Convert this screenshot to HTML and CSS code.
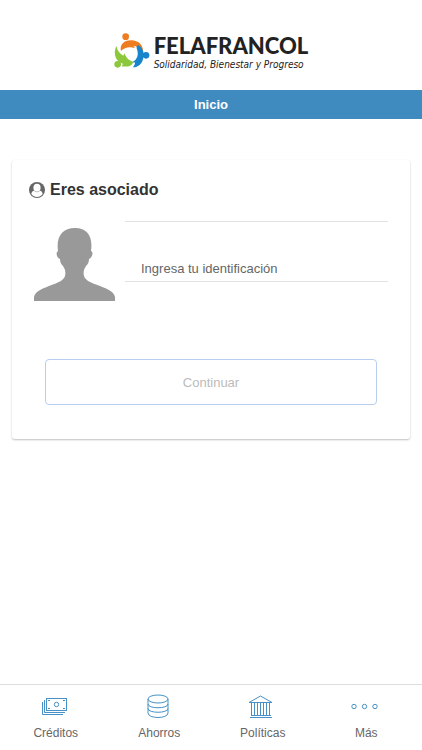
FILE: index.html
```html
<!DOCTYPE html>
<html lang="es">
<head>
  <meta charset="UTF-8" />
  <meta name="viewport" content="width=device-width, initial-scale=1.0" />
  <title>Felafrancol</title>
  <link rel="stylesheet" href="styles.css">
</head>
<body>

<!-- logo -->
<header class="brand">
  <svg class="brand-mark" viewBox="8 8 108 111" aria-hidden="true">
    <g fill="#ee7d22">
      <circle cx="43" cy="19" r="10"/>
      <path d="M29 62C24 44 38 29 61 30c20 1 33 12 35 34C88 53 78 48 66 47c2 2 4 4 5 7-15-6-30-4-42 8z"/>
    </g>
    <g fill="#8cc83c">
      <circle cx="19" cy="102" r="10"/>
      <path d="M15 47c3 14 10 23 21 29l3-7c5 12 12 21 26 25-1 12-15 17-34 14l4-8C14 94 4 72 15 47z"/>
    </g>
    <g fill="#1784cc">
      <circle cx="104" cy="75" r="10"/>
      <path d="M76 54c-1-6 1-9 5-9 13 7 18 21 15 37-3 17-14 29-32 29 5-4 7-9 7-15-3 1-5 1-8 0 16-9 20-24 13-42z"/>
    </g>
  </svg>
  <div class="brand-text">
    <span class="brand-name">FELAFRANCOL</span>
    <span class="brand-slogan">Solidaridad, Bienestar y Progreso</span>
  </div>
</header>

<h1 class="page-title">Inicio</h1>

<!-- login card -->
<main class="content">
  <form class="card">
    <h2 class="card-title">
      <svg class="card-icon" viewBox="0 0 16 16" aria-hidden="true">
        <circle cx="8" cy="8" r="8" fill="#666"/>
        <ellipse cx="8" cy="5.800" rx="3.600" ry="4" fill="#fff"/>
        <path fill="#fff" d="M2.300 12c.3-1.900 1.200-3.100 2.700-3.300 1.700 1.900 4.300 1.900 6 0 1.500.2 2.400 1.400 2.700 3.300-2.800 3.900-8.600 3.900-11.400 0z"/>
      </svg>
      Eres asociado
    </h2>
    <div class="identity">
      <svg class="avatar" viewBox="0 0 81 73" aria-hidden="true">
        <path fill="#999" d="M0 73v-4c1-5 7-8 15-11 9-3 15-6 16-10 1-4 0-7-2-10-2-2-3-4-3-7-3-1-4-5-3-7l1-1C22 9 28 0 41 0s18 9 16 23c3 1 1 7-2 8 0 3-1 5-3 7-2 3-3 6-2 10 1 4 7 7 16 10 8 3 14 6 15 11v4z"/>
      </svg>
      <div class="field">
        <label for="identificacion">Ingresa tu identificación</label>
        <input type="text" id="identificacion" inputmode="numeric">
      </div>
    </div>
    <button type="submit" class="btn-continue" disabled>Continuar</button>
  </form>
</main>

<!-- bottom tabs -->
<nav class="tabs">
  <a href="#creditos">
    <svg viewBox="2 0 26 26" aria-hidden="true">
      <rect x="5.500" y="5.500" width="20" height="12"/>
      <circle cx="15.500" cy="11.500" r="2.200"/>
      <path d="M3.500 7v12.500H24M1.500 9v12.500H22M7 7.500h2M22 7.500h2M7 15.500h2M22 15.500h2"/>
    </svg>
    Créditos
  </a>
  <a href="#ahorros">
    <svg viewBox="0 0 26 26" aria-hidden="true">
      <ellipse cx="12" cy="6" rx="10" ry="4"/>
      <path d="M2 6v14c0 6 20 6 20 0V6M2 11c0 5 20 5 20 0M2 15.500c0 5 20 5 20 0"/>
    </svg>
    Ahorros
  </a>
  <a href="#politicas">
    <svg viewBox="1 0 26 26" aria-hidden="true">
      <path d="M0 9.500h23L11.500 3zM2 22.500h20M1 24.500h22M2.500 10v12M5.500 10v12M8.500 10v12M11.500 10v12M14.500 10v12M17.500 10v12M20.500 10v12"/>
    </svg>
    Políticas
  </a>
  <a href="#mas">
    <svg viewBox="0 0 26 26" aria-hidden="true">
      <circle cx="1" cy="13.500" r="2.200"/>
      <circle cx="11.500" cy="13.500" r="2.200"/>
      <circle cx="22" cy="13.500" r="2.200"/>
    </svg>
    Más
  </a>
</nav>

</body>
</html>
```

FILE: styles.css
```css
* {
  box-sizing: border-box;
}

body {
  margin: 0;
  min-height: 100vh;
  display: flex;
  flex-direction: column;
  font-family: "Liberation Sans", Arial, sans-serif;
  font-size: 13px;
  color: #666;
  background: #fff;
}

/* logo */
.brand {
  height: 90px;
  padding-top: 13px;
  display: flex;
  justify-content: center;
  align-items: center;
  gap: 4px;
}

.brand-mark {
  width: 36px;
  height: 37px;
}

.brand-text {
  display: flex;
  flex-direction: column;
  color: #222;
}

.brand-name {
  font: 900 22px/26px Lato, sans-serif;
}

.brand-slogan {
  font: italic 10px/12px "DejaVu Sans Condensed", "DejaVu Sans", sans-serif;
}

.page-title {
  margin: 0;
  font-size: 13px;
  line-height: 29px;
  text-align: center;
  color: #fff;
  background: #3f8bc0;
}

/* card */
.content {
  flex: 1;
  padding: 41px 12px 20px;
}

.card {
  padding: 20px 22px 34px 17px;
  border-radius: 3px;
  box-shadow: 0 1px 2px rgba(0, 0, 0, 0.25);
}

.card-title {
  margin: 0;
  display: flex;
  align-items: center;
  gap: 5px;
  font-size: 16px;
  line-height: 20px;
  color: #333;
}

.card-icon {
  width: 16px;
  height: 16px;
}

.identity {
  margin: 21px 0 58px 5px;
  display: flex;
  align-items: flex-start;
  gap: 10px;
}

.avatar {
  width: 81px;
  height: 73px;
  margin-top: 7px;
}

.field {
  flex: 1;
  height: 61px;
  display: grid;
  border-top: 1px solid #e2e2e4;
  border-bottom: 1px solid #e2e2e4;
}

/* label rests over the empty input */
.field label,
.field input {
  grid-area: 1 / 1;
  align-self: end;
}

.field label {
  padding: 0 16px 4px;
  line-height: 16px;
  pointer-events: none;
}

.field input {
  width: 100%;
  height: 28px;
  padding: 0 16px;
  border: 0;
  outline: none;
  font: inherit;
  color: inherit;
  background: transparent;
}

.field:focus-within label {
  padding-bottom: 30px;
}

.btn-continue {
  display: block;
  width: calc(100% - 27px);
  height: 46px;
  margin-left: 16px;
  border: 1px solid #b9cdf3;
  border-radius: 4px;
  font: inherit;
  color: #bbb;
  background: #fff;
}

/* bottom tabs */
.tabs {
  display: flex;
  padding: 8px 4px;
  border-top: 1px solid #ddd;
}

.tabs a {
  flex: 1;
  display: flex;
  flex-direction: column;
  align-items: center;
  gap: 6px;
  font-size: 12px;
  line-height: 17px;
  color: #666;
  text-decoration: none;
}

.tabs svg {
  width: 26px;
  height: 26px;
  overflow: visible;
  fill: none;
  stroke: #4791c6;
}
```
